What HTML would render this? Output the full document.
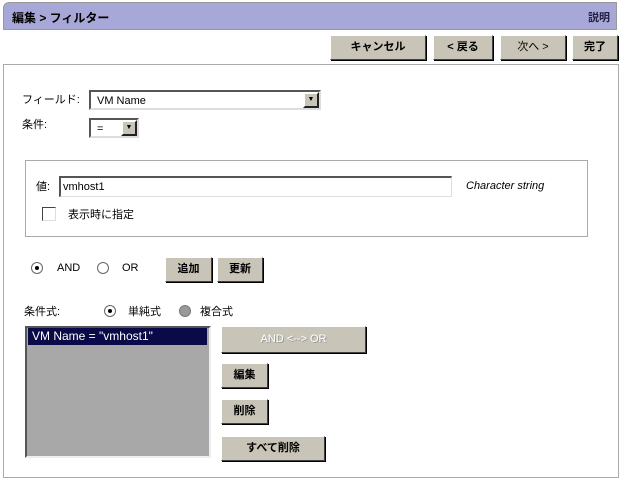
<!DOCTYPE html>
<html><head><meta charset="utf-8"><style>
body{margin:0;width:628px;height:481px;background:#fff;font-family:"Liberation Sans","Noto Sans CJK JP",sans-serif;font-size:11px;color:#000;position:relative;overflow:hidden}
.a{position:absolute}
.hdr{left:3px;top:2px;width:614px;height:28px;background:#a8a8d8;border:1px solid #999;border-radius:6px 0 0 0;box-sizing:border-box}
.btn{position:absolute;background:#c8c4b8;border:1px solid;border-color:#fff #404040 #404040 #fff;box-shadow:1px 1px 0 #000;box-sizing:border-box;text-align:center;font-weight:bold;font-size:11px}
.panel{left:3px;top:64px;width:616px;height:414px;border:1px solid #aaa;box-sizing:border-box}
.sel{position:absolute;background:#fff;border:2px solid;border-color:#555 #ddd #ddd #555;box-sizing:border-box;font-size:11px}
.arr{position:absolute;right:0px;top:0px;width:16px;height:16px;background:#c8c4b8;border:2px solid;border-color:#fff #222 #222 #fff;box-sizing:border-box;font-size:7px;line-height:12px;text-align:center}
.rad{position:absolute;width:12px;height:12px;border-radius:50%;border:1px solid #666;background:#fff;box-sizing:border-box}
.rad.on::after{content:"";position:absolute;left:3px;top:3px;width:4px;height:4px;border-radius:50%;background:#000}
</style></head><body>
<div class="a hdr"></div>
<div class="a" style="left:12px;top:9px;font-weight:bold;font-size:12px">編集 &gt; フィルター</div>
<div class="a" style="left:588px;top:9px;font-weight:bold;color:#224;font-size:11px">説明</div>
<div class="btn" style="left:330px;top:35px;width:96px;height:25px;line-height:22px">キャンセル</div>
<div class="btn" style="left:433px;top:35px;width:60px;height:25px;line-height:22px">&lt; 戻る</div>
<div class="btn" style="left:500px;top:35px;width:66px;height:25px;line-height:22px;font-weight:normal">次へ &gt;</div>
<div class="btn" style="left:572px;top:35px;width:46px;height:25px;line-height:22px">完了</div>
<div class="a panel"></div>
<div class="a" style="left:22px;top:91px">フィールド:</div>
<div class="sel" style="left:89px;top:90px;width:232px;height:20px;padding:3px 6px">VM Name<div class="arr">▼</div></div>
<div class="a" style="left:22px;top:116px">条件:</div>
<div class="sel" style="left:89px;top:118px;width:50px;height:20px;padding:3px 6px">=<div class="arr">▼</div></div>
<div class="a" style="left:25px;top:160px;width:563px;height:77px;border:1px solid #aaa;box-sizing:border-box"></div>
<div class="a" style="left:36px;top:178px">値:</div>
<div class="sel" style="left:59px;top:176px;width:393px;height:21px;padding:3px 2px;border-width:2px 1px 1px 2px">vmhost1</div>
<div class="a" style="left:466px;top:180px;font-style:italic;font-size:11px">Character string</div>
<div class="a" style="left:42px;top:207px;width:14px;height:14px;border:1px solid;border-color:#444 #ddd #ddd #444;box-sizing:border-box"></div>
<div class="a" style="left:68px;top:206px">表示時に指定</div>
<div class="rad on" style="left:31px;top:262px"></div>
<div class="a" style="left:57px;top:262px;font-size:11px">AND</div>
<div class="rad" style="left:97px;top:262px"></div>
<div class="a" style="left:122px;top:262px;font-size:11px">OR</div>
<div class="btn" style="left:165px;top:257px;width:47px;height:25px;line-height:22px">追加</div>
<div class="btn" style="left:217px;top:257px;width:46px;height:25px;line-height:22px">更新</div>
<div class="a" style="left:24px;top:303px">条件式:</div>
<div class="rad on" style="left:104px;top:305px"></div>
<div class="a" style="left:128px;top:303px">単純式</div>
<div class="rad" style="left:179px;top:305px;background:#999;border-color:#777"></div>
<div class="a" style="left:200px;top:303px">複合式</div>
<div class="a" style="left:25px;top:326px;width:186px;height:132px;background:#a8a8a8;border:2px solid;border-color:#555 #eee #eee #555;box-sizing:border-box"></div>
<div class="a" style="left:28px;top:328px;width:179px;height:17px;background:#0a0a48;color:#fff;padding-left:4px;box-sizing:border-box;line-height:16px;font-size:12px">VM Name = "vmhost1"</div>
<div class="btn" style="left:221px;top:326px;width:145px;height:27px;line-height:24px;color:#fff;font-weight:normal;text-shadow:1px 1px 0 #999">AND &lt;--&gt; OR</div>
<div class="btn" style="left:221px;top:363px;width:47px;height:25px;line-height:22px">編集</div>
<div class="btn" style="left:221px;top:399px;width:47px;height:25px;line-height:22px">削除</div>
<div class="btn" style="left:221px;top:436px;width:104px;height:25px;line-height:22px">すべて削除</div>
</body></html>
